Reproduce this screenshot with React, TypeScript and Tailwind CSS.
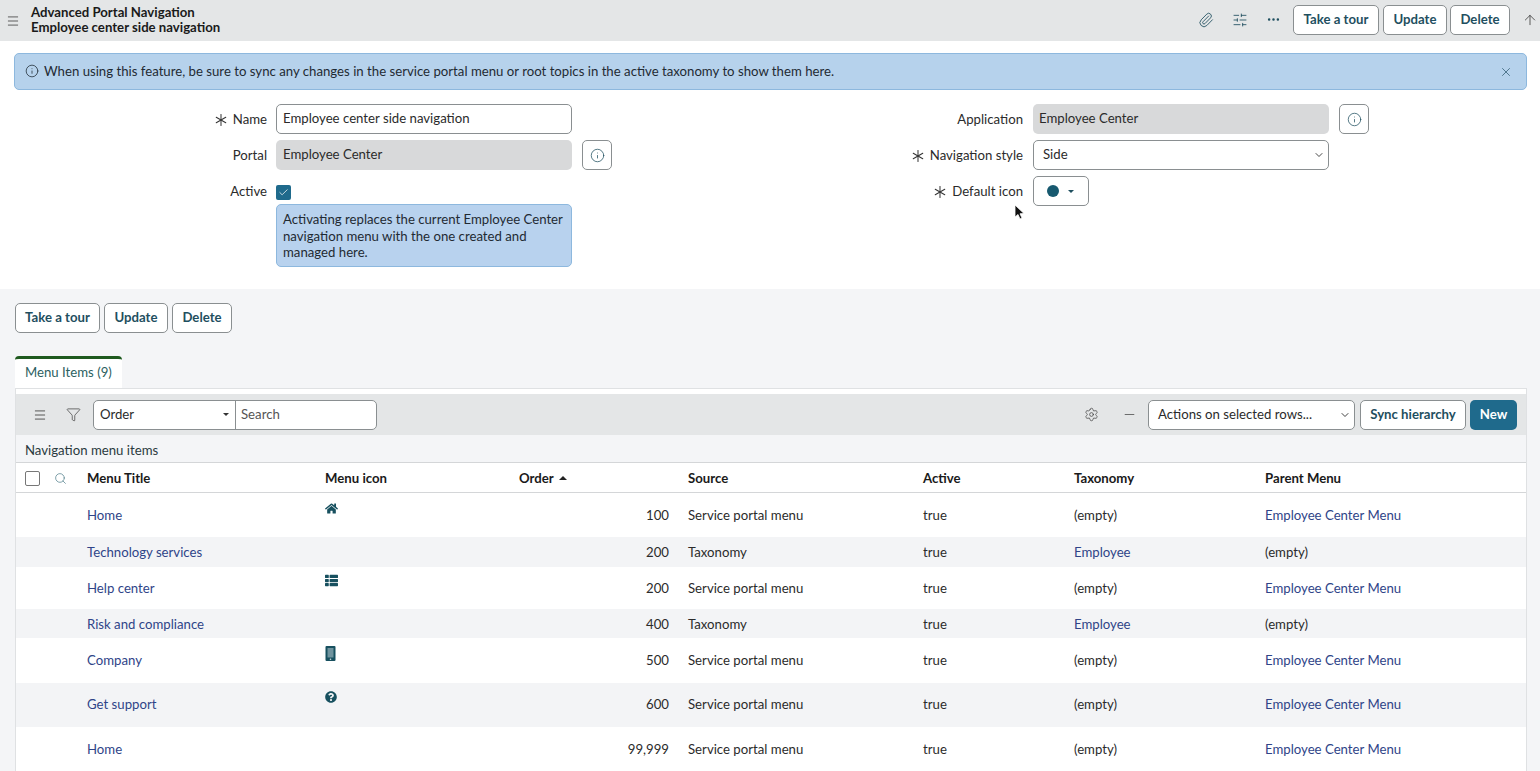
import { ArrowUp, Asterisk, Check, ChevronDown, Ellipsis, Funnel, Info, Menu, Minus, Paperclip, Search, Settings, SlidersHorizontal, X } from "lucide-react";
import { FaHome, FaQuestionCircle, FaThList } from "react-icons/fa";
import type { ReactNode } from "react";

const rowGrid = "grid grid-cols-[71px_238px_194px_169px_235px_151px_191px_1fr] items-center";

function Btn({ children, className = "" }: { children: ReactNode; className?: string }) {
  return (
    <button className={`h-[30px] rounded-[5px] border border-[#8a8f91] bg-white text-[13.2px] font-bold leading-none text-[#1f4f5f] ${className}`}>
      {children}
    </button>
  );
}

function Label({ children, required, className = "pr-[9px]" }: { children: ReactNode; required?: boolean; className?: string }) {
  return (
    <div className={`flex h-[30px] items-center justify-end gap-[1px] pt-[1px] text-[#2b2b2b] ${className}`}>
      {required && <Asterisk size={22} strokeWidth={1.1} className="text-[#333]" />}
      <span>{children}</span>
    </div>
  );
}

function InfoBtn() {
  return (
    <button className="ml-[10px] flex h-[30px] w-[30px] items-center justify-center rounded-[5px] border border-[#8a8f91] bg-white text-[#1f4f5f]">
      <Info size={15} strokeWidth={1.2} />
    </button>
  );
}

const Field = ({ children, grey, className = "px-[6px]" }: { children: ReactNode; grey?: boolean; className?: string }) => (
  <div className={`flex h-[30px] w-[296px] items-center rounded-[5px] pb-[1px] text-[#2b2b2b] ${grey ? "bg-[#d8d9da]" : "border border-[#8a8f91] bg-white"} ${className}`}>
    {children}
  </div>
);

function TabletIcon() {
  return (
    <svg width="11" height="15" viewBox="0 0 11 15">
      <rect x="0.5" y="0" width="10" height="15" rx="1" fill="#17505f" />
      <rect x="2.5" y="2" width="6" height="9.5" fill="#6f939e" />
      <circle cx="5.5" cy="13.2" r="0.8" fill="#d5e0e4" />
    </svg>
  );
}

type Row = { title: string; order: string; source: string; tax: string; taxLink?: boolean; parent: string; parentLink?: boolean; icon?: ReactNode; h: string; grey?: boolean; iconPad?: string };

const rows: Row[] = [
  { title: "Home", order: "100", source: "Service portal menu", tax: "(empty)", parent: "Employee Center Menu", parentLink: true, icon: <FaHome size={13} />, h: "h-[44px] pt-[2px]", iconPad: "pt-[7px]" },
  { title: "Technology services", order: "200", source: "Taxonomy", tax: "Employee", taxLink: true, parent: "(empty)", h: "h-[30px] pt-[2px]", grey: true },
  { title: "Help center", order: "200", source: "Service portal menu", tax: "(empty)", parent: "Employee Center Menu", parentLink: true, icon: <FaThList size={13} />, h: "h-[42px] pt-[2px]", iconPad: "pt-[5px]" },
  { title: "Risk and compliance", order: "400", source: "Taxonomy", tax: "Employee", taxLink: true, parent: "(empty)", h: "h-[29px] pt-[2px]", grey: true },
  { title: "Company", order: "500", source: "Service portal menu", tax: "(empty)", parent: "Employee Center Menu", parentLink: true, icon: <TabletIcon />, h: "h-[45px]", iconPad: "pt-[8px]" },
  { title: "Get support", order: "600", source: "Service portal menu", tax: "(empty)", parent: "Employee Center Menu", parentLink: true, icon: <FaQuestionCircle size={12} />, h: "h-[44px]", grey: true, iconPad: "pt-[8px]" },
  { title: "Home", order: "99,999", source: "Service portal menu", tax: "(empty)", parent: "Employee Center Menu", parentLink: true, h: "h-[44px] pt-[2px]" },
];

export default function App() {
  return (
    <div className="relative h-[771px] overflow-hidden bg-[#f4f5f7] font-['Lato',sans-serif] text-[13.2px] text-[#2b2b2b]">
      {/* Title bar */}
      <header className="flex h-[41px] items-center justify-between bg-[#e4e6e7] pr-[2px]">
        <div className="flex items-center">
          <Menu size={14} strokeWidth={1.6} className="ml-[6px] text-[#555]" />
          <div className="ml-[11px] pb-[2px] text-[13.2px] font-bold leading-[15px] text-[#1a1a1a]">
            <div>Advanced Portal Navigation</div>
            <div>Employee center side navigation</div>
          </div>
        </div>
        <div className="mb-[2px] flex items-center text-[#1f4f5f]">
          <Paperclip size={16} strokeWidth={1.3} className="mr-[18px]" />
          <SlidersHorizontal size={16} strokeWidth={1.3} className="mr-[18px]" />
          <Ellipsis size={15} strokeWidth={2} className="mr-[12px]" />
          <Btn className="w-[86px]">Take a tour</Btn>
          <Btn className="ml-[4px] w-[64px]">Update</Btn>
          <Btn className="ml-[3px] w-[60px]">Delete</Btn>
          <ArrowUp size={16} strokeWidth={1.3} className="ml-[12px] text-[#444]" />
        </div>
      </header>

      {/* Form */}
      <section className="h-[248px] bg-white pt-[12px]">
        <div className="ml-[14px] mr-[13px] flex h-[37px] items-center justify-between rounded-[5px] border border-[#8db8de] bg-[#b6d2ec] pl-[10px] pr-[13px] text-[#1f2a33]">
          <div className="flex items-center gap-[5px]">
            <Info size={14} strokeWidth={1.3} />
            <span>When using this feature, be sure to sync any changes in the service portal menu or root topics in the active taxonomy to show them here.</span>
          </div>
          <X size={14} strokeWidth={1.3} className="text-[#2f5a70]" />
        </div>

        <div className="mt-[14px] grid grid-cols-[276px_480px_277px_1fr] gap-y-[6px]">
          <Label required>Name</Label>
          <Field>Employee center side navigation</Field>
          <Label className="pr-[10px]">Application</Label>
          <div className="flex">
            <Field grey>Employee Center</Field>
            <InfoBtn />
          </div>

          <Label>Portal</Label>
          <div className="flex">
            <Field grey className="px-[7px]">Employee Center</Field>
            <InfoBtn />
          </div>
          <Label required className="pr-[10px]">Navigation style</Label>
          <div className="flex h-[30px] w-[296px] items-center justify-between rounded-[5px] border border-[#8a8f91] bg-white pl-[9px] pr-[3px]">
            <span>Side</span>
            <ChevronDown size={12} strokeWidth={1.8} className="text-[#333]" />
          </div>

          <Label>Active</Label>
          <div className="flex h-[30px] items-center">
            <span className="mt-[2px] flex h-[15px] w-[15px] items-center justify-center rounded-[2px] bg-[#1f6a8c]">
              <Check size={11} strokeWidth={1.6} className="text-white" />
            </span>
          </div>
          <Label required className="pr-[10px]">Default icon</Label>
          <button className="flex h-[30px] w-[56px] items-center rounded-[5px] border border-[#8a8f91] bg-white pl-[13px]">
            <span className="h-[12px] w-[12px] rounded-full bg-[#17596f]" />
            <span className="ml-[9px] h-0 w-0 border-x-[3px] border-t-[3px] border-x-transparent border-t-[#1f4f5f]" />
          </button>
        </div>

        <div className="ml-[276px] mt-[-2px] h-[63px] w-[296px] rounded-[5px] border border-[#8db8de] bg-[#b8d2ee] px-[6px] pt-[6px] leading-[16.5px] text-[#1f2a33]">
          Activating replaces the current Employee Center navigation menu with the one created and managed here.
        </div>
      </section>

      {/* Lower buttons */}
      <div className="ml-[15px] mt-[14px] flex gap-[4px]">
        <Btn className="w-[85px] pb-[1px]">Take a tour</Btn>
        <Btn className="w-[64px] pb-[1px]">Update</Btn>
        <Btn className="w-[60px] pb-[1px]">Delete</Btn>
      </div>

      {/* Tab */}
      <div className="ml-[15px] mt-[23px] h-[32px] w-[107px] rounded-t-[4px] border-t-[3px] border-[#1f5a1f] bg-white pl-[10px] pt-[4px] leading-[18px] text-[#2c5f5f]">
        Menu Items (9)
      </div>

      {/* List panel */}
      <div className="ml-[15px] mr-[13px] border-l border-r border-t border-[#dfe1e3] bg-white pt-[5px]">
        <div className="flex h-[41px] items-center justify-between bg-[#e4e6e7] pr-[9px]">
          <div className="flex items-center text-[#444]">
            <Menu size={14} strokeWidth={1.5} className="ml-[17px]" />
            <Funnel size={15} strokeWidth={1.2} className="ml-[19px]" />
            <div className="ml-[12px] flex h-[30px] w-[284px] rounded-[5px] border border-[#8a8f91] bg-white text-[#2b2b2b]">
              <div className="flex w-[142px] items-center justify-between border-r border-[#8a8f91] pl-[6px] pr-[6px]">
                <span>Order</span>
                <span className="h-0 w-0 border-x-[3px] border-t-[3px] border-x-transparent border-t-[#333]" />
              </div>
              <div className="flex items-center pl-[5px] text-[#555]">Search</div>
            </div>
          </div>
          <div className="flex items-center text-[#444]">
            <Settings size={15} strokeWidth={1.2} className="mr-[23px]" />
            <Minus size={15} strokeWidth={1.2} className="mr-[11px]" />
            <div className="flex h-[30px] w-[207px] items-center justify-between rounded-[5px] border border-[#8a8f91] bg-white pl-[9px] pr-[3px] text-[#2b2b2b]">
              <span>Actions on selected rows...</span>
              <ChevronDown size={12} strokeWidth={1.8} />
            </div>
            <Btn className="ml-[5px] w-[106px]">Sync hierarchy</Btn>
            <button className="ml-[4px] h-[30px] w-[47px] rounded-[5px] bg-[#1f6a8c] font-bold text-white">New</button>
          </div>
        </div>

        <div className="flex h-[28px] items-center border-b border-[#d4d6d8] bg-[#f4f5f7] pl-[9px] pt-[4px] text-[#2b3a40]">
          Navigation menu items
        </div>

        <div className={`${rowGrid} h-[30px] border-b border-[#d4d6d8] pt-[2px] font-bold text-[#1a1a1a]`}>
          <div className="flex items-center pl-[9px]">
            <span className="h-[15px] w-[15px] rounded-[2px] border border-[#777] bg-white" />
            <Search size={13} strokeWidth={1.3} className="ml-[14px] text-[#4b7a88]" />
          </div>
          <div>Menu Title</div>
          <div>Menu icon</div>
          <div className="flex items-center gap-[5px]">
            Order
            <span className="h-0 w-0 border-x-[4px] border-b-[4px] border-x-transparent border-b-[#222]" />
          </div>
          <div>Source</div>
          <div>Active</div>
          <div>Taxonomy</div>
          <div>Parent Menu</div>
        </div>

        {rows.map((r, i) => (
          <div key={i} className={`${rowGrid} ${r.h} ${r.grey ? "bg-[#f3f4f6]" : "bg-white"}`}>
            <div />
            <div className="text-[#2f4488]">{r.title}</div>
            <div className="h-full text-[#17505f]">
              {r.icon && <div className={r.iconPad}>{r.icon}</div>}
            </div>
            <div className="pr-[19px] text-right">{r.order}</div>
            <div>{r.source}</div>
            <div>true</div>
            <div className={r.taxLink ? "text-[#2f4488]" : ""}>{r.tax}</div>
            <div className={r.parentLink ? "text-[#2f4488]" : ""}>{r.parent}</div>
          </div>
        ))}
      </div>

      {/* Mouse pointer */}
      <svg className="absolute left-[1014px] top-[204px]" width="11" height="17" viewBox="0 0 11 17">
        <path d="M1 1 L1 13 L4 10.5 L6 15 L8 14 L6 9.8 L10 9.5 Z" fill="#111" stroke="#fff" strokeWidth="0.8" />
      </svg>
    </div>
  );
}
